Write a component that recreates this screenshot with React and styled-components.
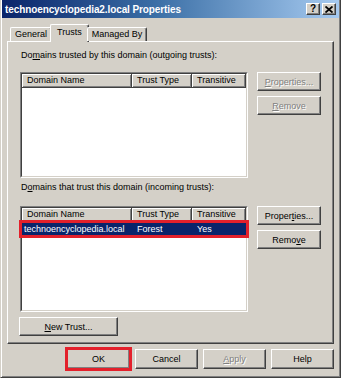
import React from "react";
import styled, { createGlobalStyle } from "styled-components";

const GlobalStyle = createGlobalStyle`
  body {
    margin: 0;
    background: #d4d0c8;
    font-family: "Liberation Sans", Arial, sans-serif;
    font-size: 9px;
    color: #000;
  }
`;

const Window = styled.div`
  box-sizing: border-box;
  width: 341px;
  height: 378px;
  background: #d4d0c8;
  border: 1px solid;
  border-color: #d4d0c8 #404040 #404040 #d4d0c8;
  border-top: 0;
  box-shadow: inset 1px 0 #fff, inset -1px -1px #808080;
  padding: 0 1px;
  display: flex;
  flex-direction: column;
`;

const TitleBar = styled.div`
  height: 18px;
  display: flex;
  align-items: center;
  justify-content: space-between;
  padding: 0 3px 0 3px;
  background: linear-gradient(to right, #0a246a 0%, #3a6ea5 45%, #a6caf0 100%);
`;

const TitleText = styled.span`
  color: #fff;
  font-weight: bold;
  font-size: 10px;
  letter-spacing: -0.1px;
`;

const CaptionButtons = styled.div`
  display: flex;
  gap: 2px;
`;

const CaptionButton = styled.div`
  box-sizing: border-box;
  width: 14px;
  height: 12px;
  background: #d4d0c8;
  border: 1px solid;
  border-color: #fff #404040 #404040 #fff;
  box-shadow: inset -1px -1px #808080;
  display: flex;
  align-items: center;
  justify-content: center;
  font-weight: bold;
  font-size: 10px;
  line-height: 1;
`;

const TabRow = styled.div`
  display: flex;
  align-items: flex-end;
  height: 17px;
  margin-top: 6px;
  padding-left: 8px;
  position: relative;
  z-index: 1;
`;

const Tab = styled.div`
  box-sizing: border-box;
  height: ${(p) => (p.$active ? "18px" : "14px")};
  margin: ${(p) => (p.$active ? "0 -2px -1px -2px" : "0")};
  padding: ${(p) => (p.$active ? "2px 6px 0" : "1px 4px 0")};
  background: #d4d0c8;
  border: 1px solid;
  border-color: #fff #404040 transparent #fff;
  border-bottom: 0;
  border-radius: 2px 2px 0 0;
  box-shadow: inset -1px 0 #808080;
  line-height: 11px;
  white-space: nowrap;
`;

const Panel = styled.div`
  box-sizing: border-box;
  margin: 0 5px;
  height: 303px;
  border: 1px solid;
  border-color: #fff #404040 #404040 #fff;
  box-shadow: inset -1px -1px #808080;
  padding: 7px 9px 6px 12px;
  display: flex;
  flex-direction: column;
`;

const Label = styled.div`
  line-height: 12px;
  margin-top: ${(p) => p.$top || 0}px;
  padding-left: 1px;
`;

const Section = styled.div`
  display: flex;
  align-items: flex-start;
  margin-top: ${(p) => p.$top}px;
`;

const ListFrame = styled.div`
  box-sizing: border-box;
  width: 228px;
  height: 106px;
  border: 1px solid;
  border-color: #808080 #fff #fff #808080;
`;

const ListInner = styled.div`
  box-sizing: border-box;
  height: 100%;
  background: #fff;
  border: 1px solid;
  border-color: #404040 #d4d0c8 #d4d0c8 #404040;
`;

const HeaderRow = styled.div`
  display: flex;
  height: 14px;
`;

const HeaderCell = styled.div`
  box-sizing: border-box;
  width: ${(p) => p.$w}px;
  background: #d4d0c8;
  border-right: 1px solid #404040;
  border-bottom: 1px solid #404040;
  box-shadow: inset 1px 1px #fff, inset -1px -1px #808080;
  padding-left: 5px;
  line-height: 13px;
  white-space: nowrap;
`;

const Row = styled.div`
  display: flex;
  height: 12px;
  margin-top: 1px;
  background: ${(p) => (p.$selected ? "#0a246a" : "transparent")};
  color: ${(p) => (p.$selected ? "#fff" : "#000")};
  outline: ${(p) => (p.$marked ? "3px solid #e3202b" : "none")};
`;

const Cell = styled.div`
  box-sizing: border-box;
  width: ${(p) => p.$w}px;
  padding-left: ${(p) => p.$pad}px;
  line-height: 12px;
  white-space: nowrap;
`;

const ButtonColumn = styled.div`
  display: flex;
  flex-direction: column;
  gap: 5px;
  margin-left: 9px;
`;

const Button = styled.div`
  box-sizing: border-box;
  width: ${(p) => p.$w || 64}px;
  height: ${(p) => p.$h || 19}px;
  background: #d4d0c8;
  border: 1px solid;
  border-color: #fff #404040 #404040 #fff;
  box-shadow: inset -1px -1px #808080;
  display: flex;
  align-items: center;
  justify-content: center;
  color: ${(p) => (p.$disabled ? "#808080" : "#000")};
  text-shadow: ${(p) => (p.$disabled ? "1px 1px #fff" : "none")};
  outline: ${(p) => (p.$marked ? "3px solid #e3202b" : "none")};
  outline-offset: -1px;
  white-space: nowrap;
`;

const NewTrustButton = styled(Button)`
  margin-top: 5px;
  margin-left: -1px;
`;

const Footer = styled.div`
  display: flex;
  justify-content: flex-end;
  gap: 5px;
  margin-top: 5px;
  padding-right: 5px;
`;

const Key = styled.span`
  text-decoration: underline;
`;

const CloseGlyph = () => (
  <svg width="8" height="7" viewBox="0 0 8 7">
    <path d="M0.5 0.5 L7.5 6.5 M7.5 0.5 L0.5 6.5" stroke="#000" strokeWidth="1.8" />
  </svg>
);

const columns = [110, 60, 54];

const TrustList = ({ rows }) => (
  <ListFrame>
    <ListInner>
      <HeaderRow>
        <HeaderCell $w={columns[0]}>Domain Name</HeaderCell>
        <HeaderCell $w={columns[1]}>Trust Type</HeaderCell>
        <HeaderCell $w={columns[2]}>Transitive</HeaderCell>
      </HeaderRow>
      {rows.map((r) => (
        <Row key={r.name} $selected $marked>
          <Cell $w={columns[0]} $pad={2}>{r.name}</Cell>
          <Cell $w={columns[1]} $pad={5}>{r.type}</Cell>
          <Cell $w={columns[2]} $pad={5}>{r.transitive}</Cell>
        </Row>
      ))}
    </ListInner>
  </ListFrame>
);

export default function App() {
  return (
    <>
      <GlobalStyle />
      <Window>
        <TitleBar>
          <TitleText>technoencyclopedia2.local Properties</TitleText>
          <CaptionButtons>
            <CaptionButton>?</CaptionButton>
            <CaptionButton>
              <CloseGlyph />
            </CaptionButton>
          </CaptionButtons>
        </TitleBar>
        <TabRow>
          <Tab>General</Tab>
          <Tab $active>Trusts</Tab>
          <Tab>Managed By</Tab>
        </TabRow>
        <Panel>
          <Label>
            Do<Key>m</Key>ains trusted by this domain (outgoing trusts):
          </Label>
          <Section $top={11}>
            <TrustList rows={[]} />
            <ButtonColumn>
              <Button $disabled>
                <Key>P</Key>roperties...
              </Button>
              <Button $disabled>
                <Key>R</Key>emove
              </Button>
            </ButtonColumn>
          </Section>
          <Label $top={3}>
            D<Key>o</Key>mains that trust this domain (incoming trusts):
          </Label>
          <Section $top={13}>
            <TrustList
              rows={[{ name: "technoencyclopedia.local", type: "Forest", transitive: "Yes" }]}
            />
            <ButtonColumn>
              <Button>
                Proper<Key>t</Key>ies...
              </Button>
              <Button>
                Remo<Key>v</Key>e
              </Button>
            </ButtonColumn>
          </Section>
          <NewTrustButton $w={99}>
            <Key>N</Key>ew Trust...
          </NewTrustButton>
        </Panel>
        <Footer>
          <Button $w={63} $h={20} $marked>OK</Button>
          <Button $w={63} $h={20}>Cancel</Button>
          <Button $w={63} $h={20} $disabled>
            <Key>A</Key>pply
          </Button>
          <Button $w={63} $h={20}>Help</Button>
        </Footer>
      </Window>
    </>
  );
}
